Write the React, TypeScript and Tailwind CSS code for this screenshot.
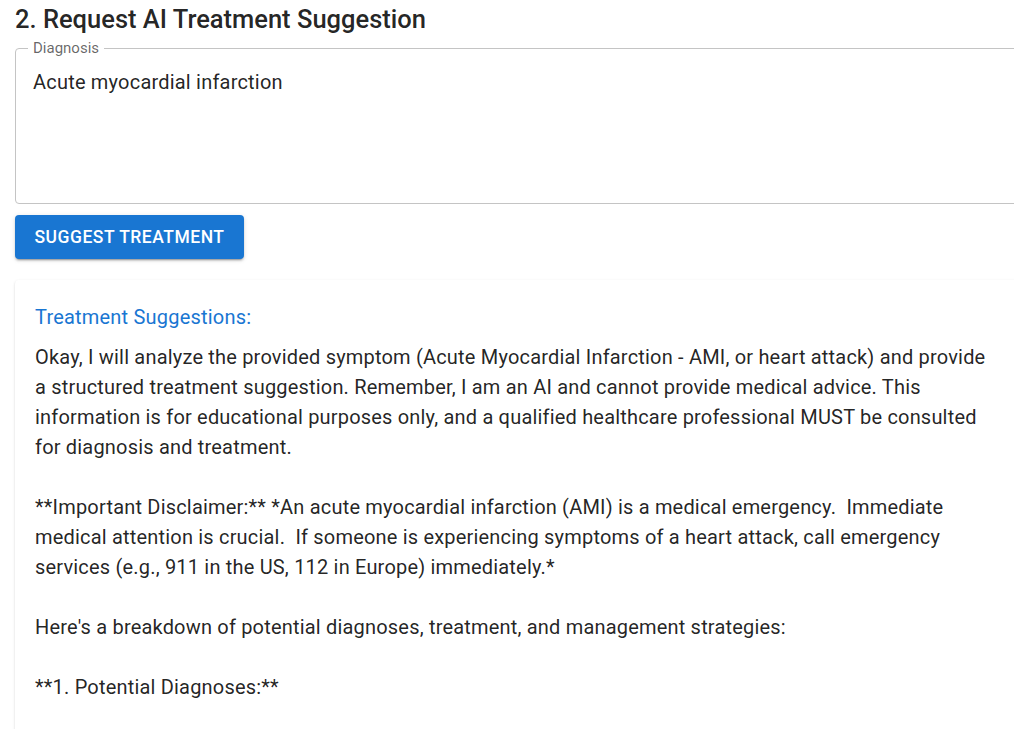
import React from "react";

const suggestion = `Okay, I will analyze the provided symptom (Acute Myocardial Infarction - AMI, or heart attack) and provide a structured treatment suggestion. Remember, I am an AI and cannot provide medical advice. This information is for educational purposes only, and a qualified healthcare professional MUST be consulted for diagnosis and treatment.

**Important Disclaimer:** *An acute myocardial infarction (AMI) is a medical emergency.  Immediate medical attention is crucial.  If someone is experiencing symptoms of a heart attack, call emergency services (e.g., 911 in the US, 112 in Europe) immediately.*

Here's a breakdown of potential diagnoses, treatment, and management strategies:

**1. Potential Diagnoses:**

*   **Acute Myocardial Infarction (AMI):** This is the primary diagnosis based on the symptom.`;

function DiagnosisField() {
  return (
    <fieldset className="w-[1060px] rounded-[4px] border border-[#c4c4c4]">
      <legend className="ml-[12px] px-[5px] text-[15px] leading-[16px] text-[rgba(0,0,0,0.6)]">
        Diagnosis
      </legend>
      <div className="h-[147px] pt-[13px] pl-[17px] text-[20px] leading-[27px] tracking-[0.01em] text-[rgba(0,0,0,0.87)]">
        Acute myocardial infarction
      </div>
    </fieldset>
  );
}

export default function App() {
  return (
    <div className="h-[729px] w-full overflow-hidden bg-white font-['Roboto','Liberation_Sans',sans-serif]">
      <div className="w-[1080px] pl-[15px]">
        <h2 className="text-[25.5px] font-medium leading-[38px] text-[rgba(0,0,0,0.87)]">
          2. Request AI Treatment Suggestion
        </h2>

        <div className="mt-[2px]">
          <DiagnosisField />
        </div>

        <button className="mt-[11px] h-[44px] w-[229px] rounded-[4px] bg-[#1976d2] text-[17.5px] font-medium uppercase tracking-[0.029em] text-white shadow-[0_3px_1px_-2px_rgba(0,0,0,0.2),0_2px_2px_0_rgba(0,0,0,0.14),0_1px_5px_0_rgba(0,0,0,0.12)]">
          Suggest Treatment
        </button>

        <div className="mt-[21px] w-[1060px] rounded-[4px] bg-white pt-[22px] pl-[20px] pb-6 shadow-[0_2px_1px_-1px_rgba(0,0,0,0.2),0_1px_1px_0_rgba(0,0,0,0.14),0_1px_3px_0_rgba(0,0,0,0.12)]">
          <h3 className="mb-[10px] text-[20px] leading-[30px] tracking-[0.01em] text-[#1976d2]">
            Treatment Suggestions:
          </h3>
          <p className="w-[958px] whitespace-pre-wrap text-[20px] leading-[30px] tracking-[0.00938em] text-[rgba(0,0,0,0.87)]">
            {suggestion}
          </p>
        </div>
      </div>
    </div>
  );
}
